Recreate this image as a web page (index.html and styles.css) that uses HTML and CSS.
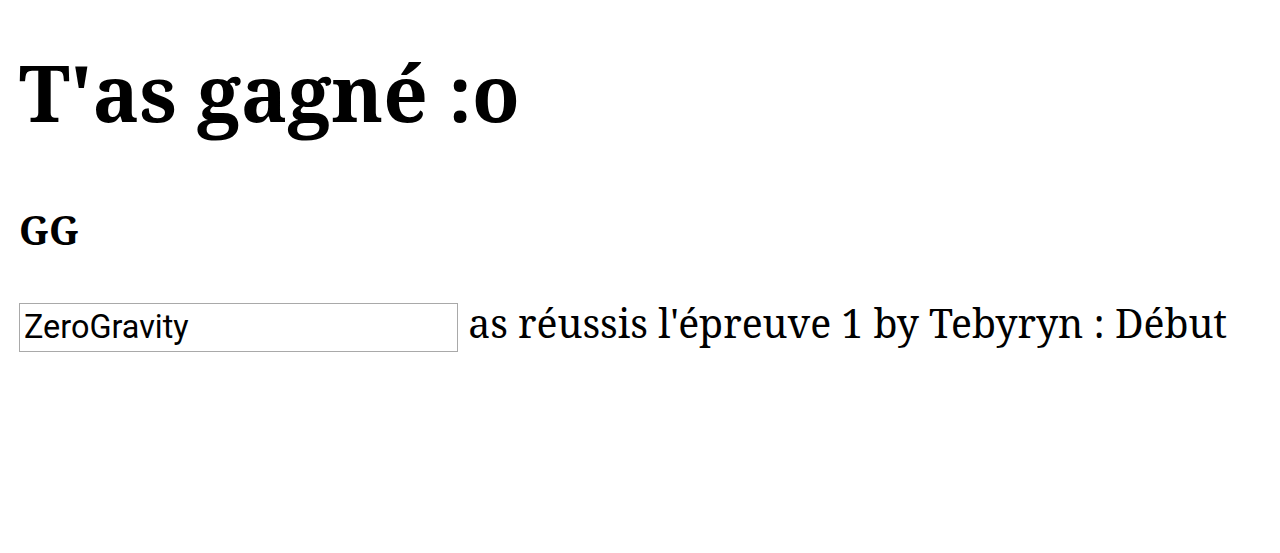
FILE: index.html
```html
<!DOCTYPE html>
<html lang="fr">
<head>
<meta charset="utf-8">
<title>GG</title>
<link rel="stylesheet" href="styles.css">
</head>
<body>
<main class="page">
<h1 class="title">T'as gagné :o</h1>
<h2 class="subtitle">GG</h2>
<p class="line"><input class="name" type="text" value="ZeroGravity"> as réussis l'épreuve 1 by Tebyryn : Début</p>
</main>
</body>
</html>
```
FILE: styles.css
```css
html, body {
  margin: 0;
  padding: 0;
  background: #fff;
}
.page {
  padding: 39px 19px 0;
  font-family: "Noto Serif", "DejaVu Serif", serif;
  color: #000;
}
.title {
  font-size: 78px;
  font-weight: bold;
  line-height: normal;
  margin: 0 0 58px;
}
.subtitle {
  font-size: 39px;
  font-weight: bold;
  line-height: normal;
  margin: 0 0 40px;
}
.line {
  font-size: 39.2px;
  line-height: normal;
  margin: 0;
}
.name {
  box-sizing: border-box;
  width: 439px;
  height: 49px;
  margin: 0;
  padding: 1px 4px;
  font-family: Roboto, "Liberation Sans", sans-serif;
  font-size: 32.4px;
  color: #000;
  background: #fff;
  border: 1px solid #a9a9a9;
  border-radius: 0;
  outline: none;
}
```
